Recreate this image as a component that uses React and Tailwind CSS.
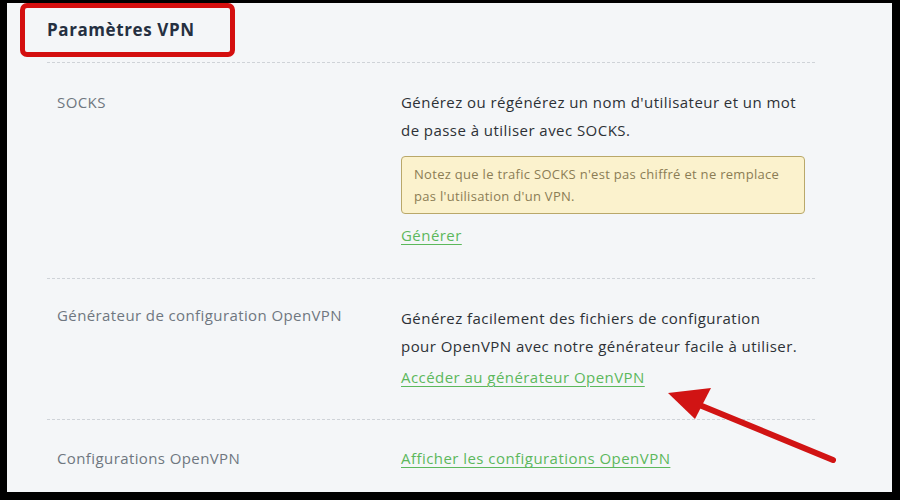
export default function App() {
  const font = { fontFamily: '"Open Sans", "DejaVu Sans", sans-serif' };
  return (
    <div className="h-[500px] w-[900px] overflow-hidden bg-black pl-[7px] pt-[3px]" style={font}>
      <div className="relative h-[489px] w-[885px] bg-[#f4f6f8]">
        <div className="ml-[13px] flex h-[54px] w-[215px] items-start rounded-[7px] border-[5px] border-[#d40f0f] pl-[22px] pt-[9px]">
          <h1 className="text-[17px] font-bold tracking-[0.6px] text-[#253041]">Paramètres VPN</h1>
        </div>

        <div className="ml-[40px] mt-[5px] w-[768px]">
          <section className="flex border-t border-dashed border-[#cfd3d8] pb-[31px] pt-[25px]">
            <div className="w-[354px] pl-[10px] pt-[3px] text-[15px] tracking-[0.4px] text-[#6f7780]">SOCKS</div>
            <div className="w-[404px]">
              <p className="text-[15px] leading-[28px] tracking-[0.45px] text-[#2d3136]">
                Générez ou régénérez un nom d'utilisateur et un mot de passe à utiliser avec SOCKS.
              </p>
              <div className="mt-[12px] rounded-[4px] border border-[#b9a86a] bg-[#fbf2cd] px-[12px] py-[6px] text-[13px] leading-[22px] tracking-[0.3px] text-[#8b7d55]">
                Notez que le trafic SOCKS n'est pas chiffré et ne remplace pas l'utilisation d'un VPN.
              </div>
              <a href="#" className="mt-[10px] inline-block text-[15px] leading-[22px] tracking-[0.45px] text-[#5cb85c] underline underline-offset-[3px]">
                Générer
              </a>
            </div>
          </section>

          <section className="flex border-t border-dashed border-[#cfd3d8] pb-[30px] pt-[25px]">
            <div className="w-[354px] pl-[10px] text-[15px] tracking-[0.4px] text-[#6f7780]">Générateur de configuration OpenVPN</div>
            <div className="w-[404px]">
              <p className="text-[15px] leading-[28px] tracking-[0.45px] text-[#2d3136]">
                Générez facilement des fichiers de configuration
                <br />
                pour OpenVPN avec notre générateur facile à utiliser.
              </p>
              <a href="#" className="mt-[6px] inline-block text-[15px] leading-[22px] tracking-[0.45px] text-[#5cb85c] underline underline-offset-[3px]">
                Accéder au générateur OpenVPN
              </a>
            </div>
          </section>

          <section className="flex items-center border-t border-dashed border-[#cfd3d8] pt-[27px]">
            <div className="w-[354px] pl-[10px] text-[15px] tracking-[0.4px] text-[#6f7780]">Configurations OpenVPN</div>
            <a href="#" className="text-[15px] leading-[22px] tracking-[0.45px] text-[#5cb85c] underline underline-offset-[3px]">
              Afficher les configurations OpenVPN
            </a>
          </section>
        </div>

        <svg className="absolute left-0 top-0" width="885" height="489" viewBox="0 0 885 489">
          <line x1="826" y1="457" x2="690" y2="401" stroke="#d11414" strokeWidth="6" strokeLinecap="round" />
          <polygon points="661,390 704,385 688,416" fill="#d11414" />
        </svg>
      </div>
    </div>
  );
}
